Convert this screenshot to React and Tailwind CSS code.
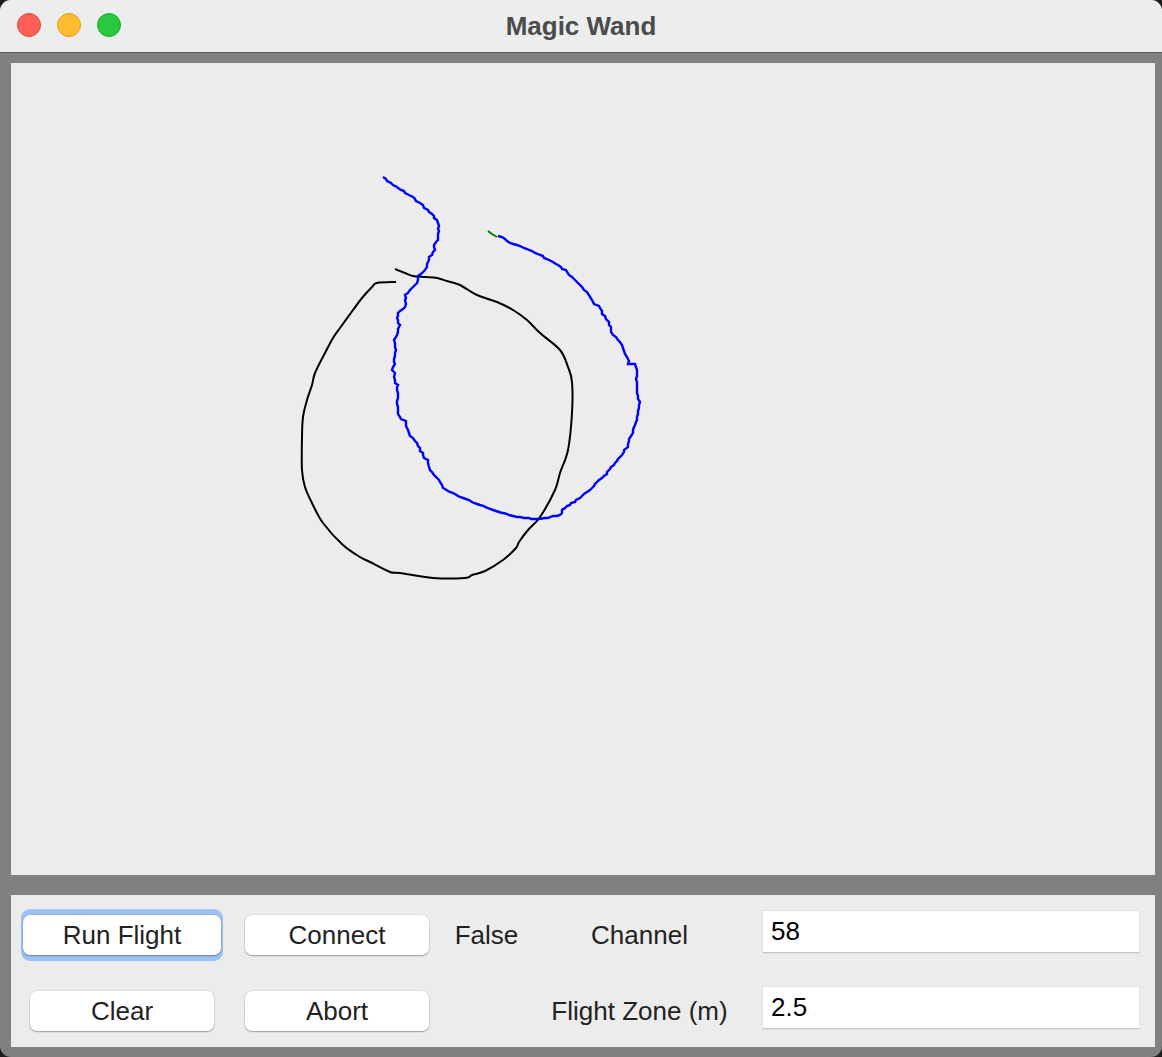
import React from "react";

const blackPath = [
  [395, 269], [405, 273], [413, 276], [425, 277], [437, 278], [447, 281], [460, 285], [477, 295], [497, 302],
  [513, 310], [527, 320], [540, 333], [560, 350], [568, 367], [572, 382], [572, 413], [568, 450], [560, 473],
  [555, 490], [540, 517], [528, 530], [519, 542], [516, 548], [503, 560], [485, 571], [472, 575], [465, 578],
  [433, 578], [400, 573], [390, 572], [370, 562], [360, 557], [343, 545], [323, 523], [312, 503], [305, 487],
  [302, 470], [302, 437], [303, 417], [307, 400], [312, 385], [315, 373], [325, 353], [333, 338], [340, 328],
  [353, 310], [362, 298], [372, 287], [377, 283], [396, 282],
];

const bluePath = [
  [383, 177], [393, 185], [403, 191], [412, 197], [420, 203], [430, 212], [437, 220], [438, 223], [438, 237],
  [435, 242], [433, 247], [435, 250], [430, 257], [427, 267], [423, 272], [418, 276], [417, 283], [410, 290],
  [406, 295], [406, 300], [405, 307], [398, 313], [397, 318], [400, 325], [398, 332], [395, 337], [395, 353],
  [393, 370], [395, 383], [398, 387], [398, 407], [400, 417], [407, 423], [408, 433], [417, 443], [422, 453],
  [427, 460], [430, 470], [440, 482], [443, 488], [450, 492], [463, 498], [480, 505], [493, 510], [510, 515],
  [523, 518], [537, 519], [550, 517], [560, 515], [565, 508], [577, 500], [590, 490], [602, 478], [613, 465],
  [620, 457], [627, 447], [633, 430], [637, 417], [640, 402], [637, 393], [637, 370], [635, 364], [628, 364],
  [627, 357], [622, 345], [612, 332], [608, 322], [600, 308], [593, 302], [587, 292], [580, 285], [572, 277],
  [567, 272], [560, 267], [550, 260], [540, 255], [530, 250], [520, 246], [510, 243], [502, 237], [498, 236],
];

const greenPath = [[488, 231], [492, 234], [497, 237]];

// step along each segment in small integer moves so the stroke looks hand-traced
function jagged(points) {
  let seed = 7;
  const rand = () => {
    seed = (seed * 9301 + 49297) % 233280;
    return seed / 233280;
  };
  const out = [];
  for (let i = 0; i < points.length - 1; i++) {
    const [x1, y1] = points[i];
    const [x2, y2] = points[i + 1];
    const steps = Math.max(1, Math.round(Math.hypot(x2 - x1, y2 - y1) / 3));
    for (let s = 0; s < steps; s++) {
      const t = s / steps;
      const jx = rand() < 0.3 ? (rand() < 0.5 ? -1 : 1) : 0;
      out.push([Math.round(x1 + (x2 - x1) * t) + jx, Math.round(y1 + (y2 - y1) * t)]);
    }
  }
  out.push(points[points.length - 1]);
  return out;
}

// catmull-rom through the points, for the smooth black stroke
function smooth(pts) {
  let d = `M${pts[0][0]},${pts[0][1]}`;
  for (let i = 0; i < pts.length - 1; i++) {
    const p0 = pts[i - 1] || pts[i];
    const p1 = pts[i];
    const p2 = pts[i + 1];
    const p3 = pts[i + 2] || p2;
    const c1x = p1[0] + (p2[0] - p0[0]) / 6;
    const c1y = p1[1] + (p2[1] - p0[1]) / 6;
    const c2x = p2[0] - (p3[0] - p1[0]) / 6;
    const c2y = p2[1] - (p3[1] - p1[1]) / 6;
    d += ` C${c1x},${c1y} ${c2x},${c2y} ${p2[0]},${p2[1]}`;
  }
  return d;
}

const toPoints = (pts) => pts.map(([x, y]) => `${x},${y}`).join(" ");

function Button({ children, focused }) {
  const btn = (
    <div className="flex h-[40px] w-full items-center justify-center rounded-[7px] bg-white text-[26px] leading-none text-[#222] shadow-[0_1px_1.5px_rgba(0,0,0,0.3),0_0_0_0.5px_rgba(0,0,0,0.1)]">
      {children}
    </div>
  );
  if (focused) {
    return <div className="w-[202px] rounded-[9px] bg-[#9cc2f2] px-[2px] py-[6px]">{btn}</div>;
  }
  return <div className="w-[184px]">{btn}</div>;
}

function Entry({ value }) {
  return (
    <div className="mt-[2px] flex h-[42px] w-[376px] items-center self-start border-b border-[#c4c4c4] bg-white pl-[8px] text-[26px] text-black shadow-[0_0_0_0.5px_rgba(0,0,0,0.08)]">
      {value}
    </div>
  );
}

export default function App() {
  return (
    <div className="h-[1057px] w-[1162px] bg-[#1d1d1d] font-['Liberation_Sans',Arial,sans-serif]">
      <div className="flex h-full w-full flex-col overflow-hidden rounded-[11px] bg-[#808080]">
        <div className="relative flex h-[53px] shrink-0 items-center justify-center border-b border-[#5f5f5f] bg-[#eceeed]">
          <div className="absolute left-[17px] top-[13px] flex gap-[16px]">
            <div className="h-[24px] w-[24px] rounded-full border border-[#e2463f] bg-[#ff5f57]" />
            <div className="h-[24px] w-[24px] rounded-full border border-[#e1a116] bg-[#febc2e]" />
            <div className="h-[24px] w-[24px] rounded-full border border-[#1aab29] bg-[#28c840]" />
          </div>
          <span className="text-[26px] font-bold text-[#4b4b4b]">Magic Wand</span>
        </div>

        <div className="flex flex-1 flex-col pl-[11px] pr-[7px] pt-[10px] pb-[10px]">
          <div className="h-[812px] w-[1144px] bg-[#ececec]">
            <svg width="1144" height="812" viewBox="11 63 1144 812">
              <path d={smooth(blackPath)} fill="none" stroke="#000" strokeWidth="2" strokeLinejoin="round" />
              <polyline points={toPoints(jagged(bluePath))} fill="none" stroke="#0000ff" strokeWidth="2.4" strokeLinejoin="miter" />
              <polyline points={toPoints(greenPath)} fill="none" stroke="#008000" strokeWidth="2" />
            </svg>
          </div>

          <div className="mt-[20px] grid h-[152px] w-[1144px] grid-cols-[202px_206px_115px_191px_404px] grid-rows-[52px_52px] gap-y-[24px] bg-[#ececec] pl-[10px] pt-[14px] text-[26px] text-[#222]">
            <div className="flex items-center">
              <Button focused>Run Flight</Button>
            </div>
            <div className="flex items-center justify-end">
              <Button>Connect</Button>
            </div>
            <div className="flex items-center justify-center">False</div>
            <div className="flex items-center justify-center">Channel</div>
            <div className="flex justify-end">
              <Entry value="58" />
            </div>

            <div className="flex items-center justify-center">
              <Button>Clear</Button>
            </div>
            <div className="flex items-center justify-end">
              <Button>Abort</Button>
            </div>
            <div />
            <div className="flex items-center justify-center whitespace-nowrap">Flight Zone (m)</div>
            <div className="flex justify-end">
              <Entry value="2.5" />
            </div>
          </div>
        </div>
      </div>
    </div>
  );
}
